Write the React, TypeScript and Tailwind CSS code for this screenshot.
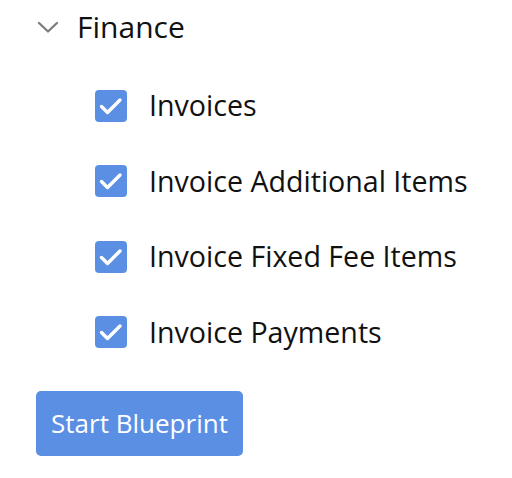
const tables = [
  'Invoices',
  'Invoice Additional Items',
  'Invoice Fixed Fee Items',
  'Invoice Payments',
];

function Chevron() {
  return (
    <svg width="22" height="12" viewBox="0 0 22 12" fill="none">
      <polyline points="2,2 11,10.5 20,2" stroke="#7a7a7a" strokeWidth="2.2" strokeLinecap="round" strokeLinejoin="round" />
    </svg>
  );
}

function CheckMark() {
  return (
    <svg width="32" height="32" viewBox="0 0 32 32" fill="none">
      <polyline points="6.5,16.5 12.5,22.5 25,10" stroke="white" strokeWidth="3.4" strokeLinecap="round" strokeLinejoin="round" />
    </svg>
  );
}

export default function App() {
  return (
    <div className="w-[512px] h-[478px] bg-white text-[#111] font-['Open_Sans',sans-serif]">
      {/* Group header */}
      <div className="flex items-center h-[54px] pl-[37px]">
        <Chevron />
        <span className="ml-[18px] text-[30px] leading-none">Finance</span>
      </div>

      {/* Items */}
      <div className="flex flex-col pt-[14px] pl-[95px]">
        {tables.map((name) => (
          <label key={name} className="flex items-center h-[75.5px]">
            <span className="w-[32px] h-[32px] rounded-[4px] bg-[#5a8fe3] flex items-center justify-center">
              <CheckMark />
            </span>
            <span className="ml-[22px] text-[28.6px] leading-none">{name}</span>
          </label>
        ))}
      </div>

      {/* Action */}
      <div className="pl-[36px] pt-[21px]">
        <button className="w-[207px] h-[65px] rounded-[5px] bg-[#5a8fe3] text-white text-[26px]">
          Start Blueprint
        </button>
      </div>
    </div>
  );
}
